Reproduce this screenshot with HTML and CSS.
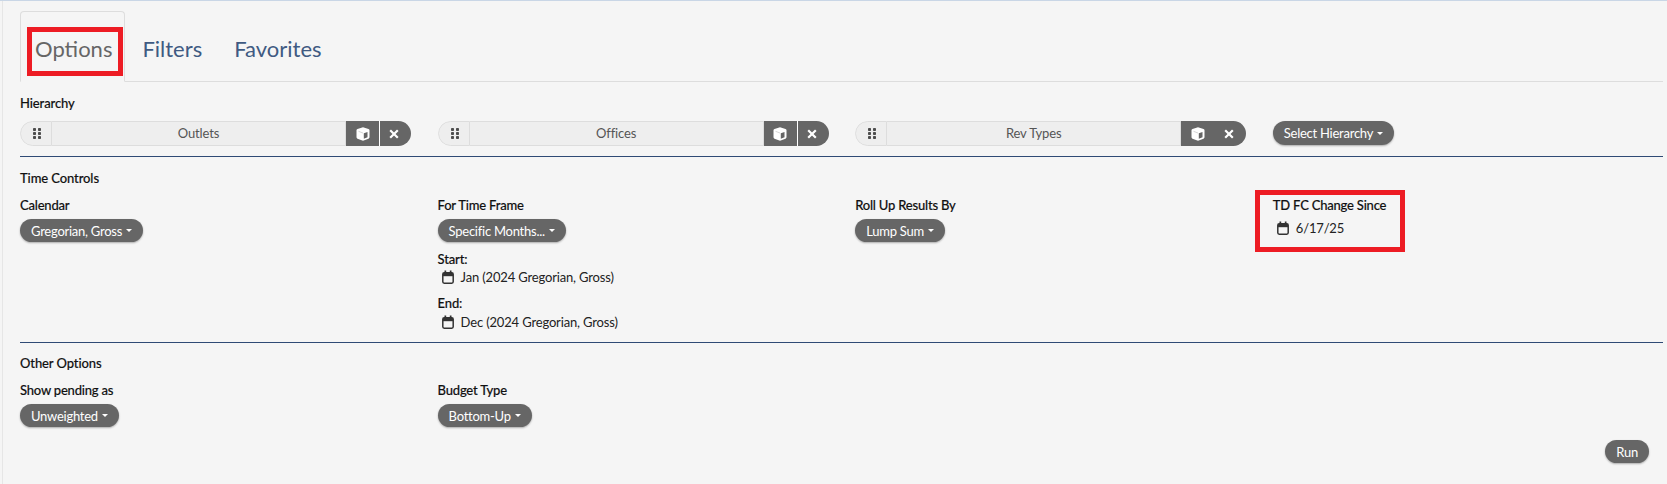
FILE: index.html
```html
<!DOCTYPE html>
<html lang="en">
<head>
<meta charset="utf-8">
<title>Options</title>
<link rel="stylesheet" href="styles.css">
</head>
<body>
<svg class="defs" width="0" height="0" aria-hidden="true">
  <symbol id="cal" viewBox="0 0 12 14"><rect x="0.8" y="2.800" width="10.400" height="10.400" rx="1.400" fill="none" stroke="#333" stroke-width="1.500"/><rect x="1" y="3" width="10" height="3.200" fill="#333"/><rect x="2.500" y="0.500" width="1.700" height="3" fill="#333"/><rect x="7.800" y="0.500" width="1.700" height="3" fill="#333"/></symbol>
  <symbol id="cube" viewBox="0 0 14 14"><path d="M7 .3l5.500 1.700q1 .3 1 1.300v7q0 1-1 1.400L7 13.700l-5.500-2q-1-.4-1-1.400v-7q0-1 1-1.300z" fill="#fff"/><path d="M7.800 6.300l3.700-1.300v5.300l-3.700 1.400z" fill="#666"/><path d="M2.500 4.300L7 6" stroke="#ccc" stroke-width=".8" fill="none"/></symbol>
  <symbol id="grip" viewBox="0 0 8 11"><g fill="#4d4d4d"><rect x="0" y="0" width="3" height="3" rx=".8"/><rect x="5" y="0" width="3" height="3" rx=".8"/><rect x="0" y="4" width="3" height="3" rx=".8"/><rect x="5" y="4" width="3" height="3" rx=".8"/><rect x="0" y="8" width="3" height="3" rx=".8"/><rect x="5" y="8" width="3" height="3" rx=".8"/></g></symbol>
  <symbol id="x" viewBox="0 0 10 10"><path d="M1.200 1.200l7.600 7.600m0-7.600l-7.600 7.600" stroke="#fff" stroke-width="2.200" fill="none"/></symbol>
</svg>
<main class="page">
  <nav class="tabs">
    <a class="tab tab-active">Options<span class="mark mark-tab"></span></a>
    <a class="tab">Filters</a>
    <a class="tab">Favorites</a>
  </nav>

  <section class="section section-hierarchy">
    <h2 class="heading">Hierarchy</h2>
    <div class="grid">
      <div class="pill">
        <span class="grip"><svg width="8" height="11"><use href="#grip"/></svg></span>
        <span class="pill-name">Outlets</span>
        <span class="pill-btn"><svg width="14" height="14"><use href="#cube"/></svg></span>
        <span class="pill-btn pill-end"><svg width="10" height="10"><use href="#x"/></svg></span>
      </div>
      <div class="pill">
        <span class="grip"><svg width="8" height="11"><use href="#grip"/></svg></span>
        <span class="pill-name">Offices</span>
        <span class="pill-btn"><svg width="14" height="14"><use href="#cube"/></svg></span>
        <span class="pill-btn pill-end"><svg width="10" height="10"><use href="#x"/></svg></span>
      </div>
      <div class="pill">
        <span class="grip"><svg width="8" height="11"><use href="#grip"/></svg></span>
        <span class="pill-name">Rev Types</span>
        <span class="pill-btn"><svg width="14" height="14"><use href="#cube"/></svg></span>
        <span class="pill-btn pill-end pill-plain"><svg width="10" height="10"><use href="#x"/></svg></span>
      </div>
      <div><button class="btn btn-hier">Select Hierarchy<i class="caret"></i></button></div>
    </div>
  </section>

  <section class="section section-time">
    <h2 class="heading">Time Controls</h2>
    <div class="grid">
      <div>
        <div class="label">Calendar</div>
        <button class="btn">Gregorian, Gross<i class="caret"></i></button>
      </div>
      <div>
        <div class="label">For Time Frame</div>
        <button class="btn">Specific Months...<i class="caret"></i></button>
        <div class="sub">Start:</div>
        <div class="date"><svg class="cal" width="12" height="14"><use href="#cal"/></svg>Jan (2024 Gregorian, Gross)</div>
        <div class="sub sub-end">End:</div>
        <div class="date date-end"><svg class="cal" width="12" height="14"><use href="#cal"/></svg>Dec (2024 Gregorian, Gross)</div>
      </div>
      <div>
        <div class="label">Roll Up Results By</div>
        <button class="btn">Lump Sum<i class="caret"></i></button>
      </div>
      <div class="since">
        <div class="label">TD FC Change Since</div>
        <div class="date date-since"><svg class="cal" width="12" height="14"><use href="#cal"/></svg>6/17/25</div>
        <span class="mark mark-since"></span>
      </div>
    </div>
  </section>

  <section class="section section-other">
    <h2 class="heading">Other Options</h2>
    <div class="grid">
      <div>
        <div class="label">Show pending as</div>
        <button class="btn">Unweighted<i class="caret"></i></button>
      </div>
      <div>
        <div class="label">Budget Type</div>
        <button class="btn">Bottom-Up<i class="caret"></i></button>
      </div>
    </div>
  </section>

  <div class="actions"><button class="btn btn-run">Run</button></div>
</main>
</body>
</html>
```
FILE: styles.css
```css
* { box-sizing: border-box; }
html, body { margin: 0; height: 100%; }
body {
  background: #f5f5f5;
  font-family: Lato, "Open Sans", sans-serif;
  font-size: 13px;
  color: #222;
  overflow: hidden;
  border-top: 1px solid #c9d6e6;
}
.defs { position: absolute; }
.page {
  margin-left: 2px;
  border-left: 1px solid #e6e6e6;
  padding: 10px 4px 0 17px;
  height: 483px;
}
.tabs {
  display: flex;
  height: 71px;
  border-bottom: 1px solid #ddd;
}
.tab {
  position: relative;
  display: flex;
  align-items: center;
  height: 71px;
  padding: 4px 15px 0;
  font-size: 22px;
  color: #3f5a82;
  border: 1px solid transparent;
}
.tab-active {
  color: #666;
  background: #f5f5f5;
  padding: 4px 12px 0 14px;
  margin-right: 1px;
  border-color: #ddd #ddd #f5f5f5;
  border-radius: 4px 4px 0 0;
}
.mark { position: absolute; border: 5px solid #ed1c24; pointer-events: none; }
.mark-tab { left: 6px; top: 15px; width: 96px; height: 49px; }
.section { border-bottom: 1px solid #2f4a75; }
.section-hierarchy { padding-top: 13px; height: 75px; }
.section-time { padding-top: 13px; height: 186px; }
.section-other { padding-top: 12px; border-bottom: 0; }
.heading {
  margin: 0;
  font-size: 13px;
  line-height: 16px;
  font-weight: 500;
  color: #111;
  letter-spacing: -0.100px;
  -webkit-text-stroke: 0.15px #111;
}
.grid {
  display: grid;
  grid-template-columns: repeat(4, 391px);
  column-gap: 26.600px;
}
.section-hierarchy .grid { margin-top: 10px; }
.section-time .grid, .section-other .grid { margin-top: 11px; }
.pill {
  display: flex;
  height: 25px;
  width: 391px;
  border-radius: 13px;
  overflow: hidden;
}
.grip {
  flex: 0 0 32px;
  display: flex;
  align-items: center;
  justify-content: center;
  background: #eee;
  border: 1px solid #ddd;
  border-radius: 13px 0 0 13px;
  padding-left: 2px;
}
.pill-name {
  flex: 1;
  text-align: center;
  background: #eee;
  border: 1px solid #ddd;
  border-left: 0;
  line-height: 23px;
  color: #555;
  letter-spacing: -0.150px;
}
.pill-btn {
  flex: 0 0 33px;
  display: flex;
  align-items: center;
  justify-content: center;
  background: #666;
}
.pill-end { flex-basis: 32px; border-left: 1px solid #fff; padding-right: 3px; }
.pill-plain { border-left-color: #666; }
.label {
  font-size: 13px;
  line-height: 16px;
  font-weight: 500;
  color: #111;
  letter-spacing: -0.200px;
  -webkit-text-stroke: 0.15px #111;
}
.btn {
  display: inline-flex;
  align-items: center;
  height: 23px;
  margin-top: 6px;
  padding: 0 11px;
  border: 0;
  border-radius: 12px;
  background: #666;
  color: #fff;
  font: 13px Lato, "Open Sans", sans-serif;
  letter-spacing: -0.250px;
  box-shadow: 0 1px 2px rgba(0,0,0,.3);
}
.btn-hier { margin-top: 0; height: 24px; }
.caret {
  margin-left: 4px;
  border-top: 3px solid #fff;
  border-left: 3px solid transparent;
  border-right: 3px solid transparent;
}
.sub {
  margin-top: 9px;
  line-height: 16px;
  font-weight: 500;
  color: #111;
  letter-spacing: -0.150px;
  -webkit-text-stroke: 0.15px #111;
}
.sub-end { margin-top: 10px; }
.date {
  display: flex;
  align-items: center;
  line-height: 16px;
  padding-left: 4px;
  margin-top: 2px;
  color: #222;
  letter-spacing: -0.160px;
}
.date-end { margin-top: 3px; }
.cal { margin-right: 7px; }
.date-since { margin-top: 7px; }
.since { position: relative; }
.mark-since { left: -18px; top: -7px; width: 150px; height: 62px; }
.actions { display: flex; justify-content: flex-end; margin-top: 13px; padding-right: 14px; }
.btn-run { margin-top: 0; }
```
